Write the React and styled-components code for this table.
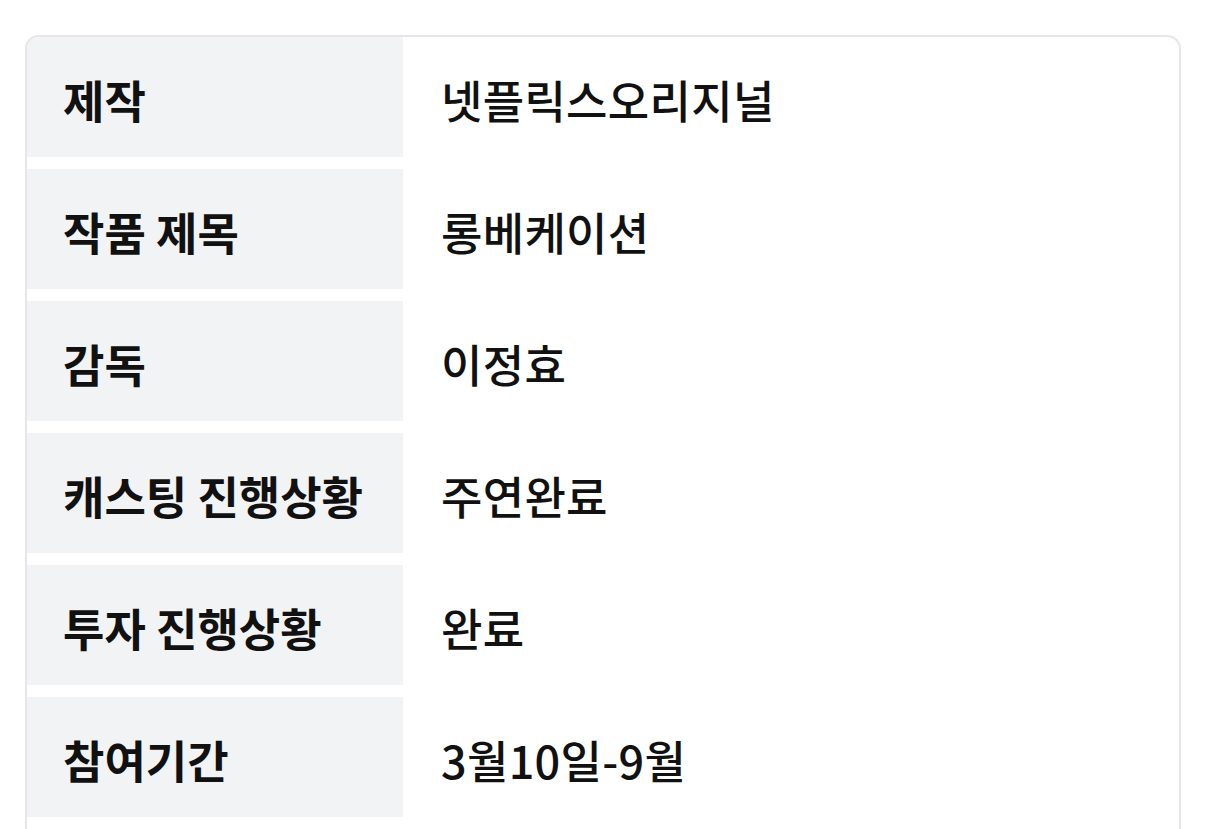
import React from "react";
import styled, { createGlobalStyle } from "styled-components";

const GlobalStyle = createGlobalStyle`
    html, body {
        margin: 0;
        padding: 0;
        background: #ffffff;
        font-family: "Noto Sans CJK KR", "Noto Sans", sans-serif;
        color: #111111;
    }
`;

const Page = styled.div`
    padding: 35px 24px 0 25px;
`;

const Card = styled.div`
    border: 2px solid #e6e6ea;
    border-radius: 14px;
    overflow: hidden;
    display: flex;
    flex-direction: column;
    gap: 12px;
    padding-bottom: 40px;
    background: #ffffff;
`;

const Row = styled.div`
    display: grid;
    grid-template-columns: 376px 1fr;
    height: 120px;
`;

const Label = styled.div`
    display: flex;
    align-items: center;
    padding-left: 36px;
    padding-top: 4px;
    background: #f2f3f5;
    font-size: 45px;
    font-weight: 700;
`;

const Value = styled.div`
    display: flex;
    align-items: center;
    padding-left: 38px;
    padding-top: 4px;
    font-size: 45px;
    font-weight: 500;
    letter-spacing: 0.3px;
`;

const rows = [
    ["제작", "넷플릭스오리지널"],
    ["작품 제목", "롱베케이션"],
    ["감독", "이정효"],
    ["캐스팅 진행상황", "주연완료"],
    ["투자 진행상황", "완료"],
    ["참여기간", "3월10일-9월"],
];

export default function App() {
    return (
        <Page>
            <GlobalStyle />
            <Card>
                {rows.map(([label, value]) => (
                    <Row key={label}>
                        <Label>{label}</Label>
                        <Value>{value}</Value>
                    </Row>
                ))}
            </Card>
        </Page>
    );
}
